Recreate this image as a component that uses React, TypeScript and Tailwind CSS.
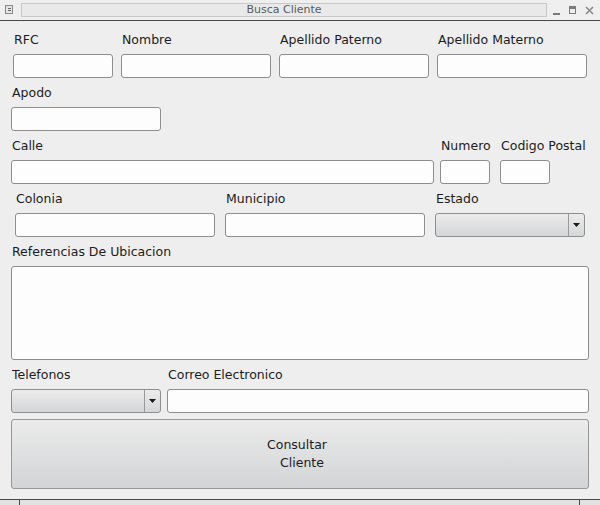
import React from 'react';

const font = { fontFamily: '"DejaVu Sans", "Liberation Sans", sans-serif' };

function Label({ text }: { text: string }) {
  return (
    <div className="h-[16px] whitespace-nowrap pl-px text-[12.5px] leading-[16px] text-[#1c1c1c]">{text}</div>
  );
}

function Input({ className = '' }: { className?: string }) {
  return <div className={`h-[24px] rounded-[3px] border border-[#8e8e8e] bg-[#fdfdfd] ${className}`} />;
}

function Combo({ className = '' }: { className?: string }) {
  return (
    <div
      className={`flex h-[24px] rounded-[3px] border border-[#8e8e8e] bg-gradient-to-b from-[#ececec] to-[#d5d6d7] ${className}`}
    >
      <div className="flex-1" />
      <div className="flex w-[16px] items-center justify-center border-l border-[#9a9a9a]">
        <svg width="7" height="4" viewBox="0 0 7 4">
          <path d="M0 0h7L3.5 4z" fill="#1a1a1a" />
        </svg>
      </div>
    </div>
  );
}

function Field({ label, width, className = '', combo }: { label: string; width: string; className?: string; combo?: boolean }) {
  return (
    <div className={`flex flex-col ${width} ${className}`}>
      <Label text={label} />
      {combo ? <Combo className="mt-[6px]" /> : <Input className="mt-[6px]" />}
    </div>
  );
}

function TitleBar() {
  return (
    <div className="flex h-[21px] items-start border-b border-[#4a4a4a] bg-[#efefef] pt-[3px]">
      <div className="ml-[5px] mt-[2px] w-[16px]">
        <svg width="8" height="9" viewBox="0 0 8 9">
          <rect x="0.5" y="0.5" width="7" height="8" fill="#e4e4e4" stroke="#8a8a8a" />
          <rect x="3" y="3" width="3" height="1" fill="#6a6a6a" />
          <rect x="3" y="5" width="3" height="1" fill="#6a6a6a" />
        </svg>
      </div>
      <div className="flex h-[14px] w-[526px] items-center justify-center border border-[#c8c8c8] bg-[#e9e9e9] text-[11px] leading-[14px] text-[#5a5a5a]">
        Busca Cliente
      </div>
      <div className="ml-[6px] mt-[3px] flex items-center gap-[8px]">
        <svg width="8" height="9" viewBox="0 0 8 9">
          <rect x="0" y="7" width="7" height="2" fill="#7a7a7a" />
        </svg>
        <svg width="8" height="9" viewBox="0 0 8 9">
          <rect x="0.5" y="0.5" width="6" height="7" fill="none" stroke="#7a7a7a" />
          <rect x="1" y="1" width="5" height="2" fill="#7a7a7a" />
        </svg>
        <svg width="9" height="9" viewBox="0 0 9 9">
          <path d="M1 1l7 7M8 1l-7 7" stroke="#8a8a8a" strokeWidth="1.6" />
        </svg>
      </div>
    </div>
  );
}

export default function App() {
  return (
    <div className="flex h-[505px] w-[600px] flex-col overflow-hidden bg-[#eeeeee]" style={font}>
      <TitleBar />

      <div className="mt-[11px] flex pl-[13px]">
        <Field label="RFC" width="w-[100px]" />
        <Field label="Nombre" width="w-[150px]" className="ml-[8px]" />
        <Field label="Apellido Paterno" width="w-[150px]" className="ml-[8px]" />
        <Field label="Apellido Materno" width="w-[150px]" className="ml-[8px]" />
      </div>

      <div className="mt-[7px] flex pl-[11px]">
        <Field label="Apodo" width="w-[150px]" />
      </div>

      <div className="mt-[7px] flex pl-[11px]">
        <Field label="Calle" width="w-[423px]" />
        <Field label="Numero" width="w-[50px]" className="ml-[6px]" />
        <Field label="Codigo Postal" width="w-[50px]" className="ml-[10px]" />
      </div>

      <div className="mt-[7px] flex pl-[15px]">
        <Field label="Colonia" width="w-[200px]" />
        <Field label="Municipio" width="w-[200px]" className="ml-[10px]" />
        <Field label="Estado" width="w-[150px]" className="ml-[10px]" combo />
      </div>

      <div className="mt-[7px] flex flex-col pl-[11px]">
        <Label text="Referencias De Ubicacion" />
        <div className="mt-[6px] h-[94px] w-[578px] rounded-[3px] border border-[#8e8e8e] bg-[#fdfdfd]" />
      </div>

      <div className="mt-[7px] flex pl-[11px]">
        <Field label="Telefonos" width="w-[150px]" combo />
        <Field label="Correo Electronico" width="w-[422px]" className="ml-[6px]" />
      </div>

      <button className="ml-[11px] mt-[6px] flex h-[70px] w-[578px] flex-col items-center justify-center rounded-[3px] border border-[#979797] bg-gradient-to-b from-[#ebebeb] to-[#d2d4d6] text-[12.5px] leading-[18px] text-[#1c1c1c]">
        <span className="-ml-[6px]">Consultar</span>
        <span className="ml-[4px]">Cliente</span>
      </button>

      <div className="mt-auto flex h-[6px] border-t border-[#4a4a4a] bg-[#e2e2e2]">
        <div className="w-[20px] border-r border-[#4a4a4a]" />
        <div className="flex-1" />
        <div className="w-[21px] border-l border-[#4a4a4a]" />
      </div>
    </div>
  );
}
